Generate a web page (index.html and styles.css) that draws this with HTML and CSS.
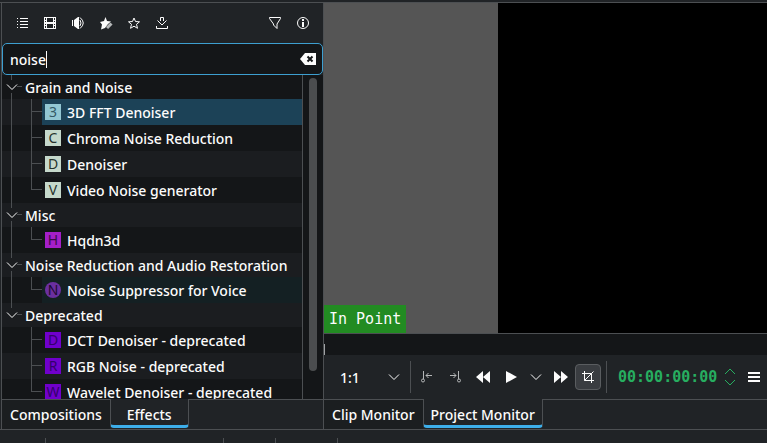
FILE: index.html
```html
<!DOCTYPE html>
<html lang="en">
<head>
    <meta charset="UTF-8">
    <meta name="viewport" content="width=device-width, initial-scale=1.0">
    <title>Effects - Project Monitor</title>
    <link rel="stylesheet" href="styles.css">
</head>
<body>
    <main class="workspace">
        <section class="dock effects">
            <div class="toolbar">
                <button class="tool" aria-label="Main effects"><svg width="16" height="16" viewBox="0 0 16 16" fill="#fcfcfc"><path d="M3 3h1v1H3zM6 3h8v1H6zM3 6h1v1H3zM6 6h8v1H6zM3 9h1v1H3zM6 9h8v1H6zM3 12h1v1H3zM6 12h8v1H6z"/></svg></button>
                <button class="tool" aria-label="Video effects"><svg width="16" height="16" viewBox="0 0 16 16" fill="#fcfcfc" fill-rule="evenodd"><path d="M2 2h12v12H2zM3 3v2h1V3zM3 6v1h1V6zM3 9v1h1V9zM3 11v2h1v-2zM12 3v2h1V3zM12 6v1h1V6zM12 9v1h1V9zM12 11v2h1v-2zM5 3v4h6V3zM5 9v4h6V9z"/></svg></button>
                <button class="tool" aria-label="Audio effects"><svg width="16" height="16" viewBox="0 0 16 16"><path fill="#fcfcfc" d="M2 5h1v6H2zM4 5l4-3h1v12H8l-4-3z"/><path fill="none" stroke="#fcfcfc" d="M10 5q2 3 0 6M10 2.500q6.500 5.500 0 11"/></svg></button>
                <button class="tool" aria-label="Custom effects"><svg width="16" height="16" viewBox="0 0 16 16"><path fill="#fcfcfc" d="M7.500 2l1.500 4 4 .5-3 2.500-3 4-4 1.500 1-5L2 7l4-1z"/><path fill="none" stroke="#b5b7b8" stroke-width="3" d="M9 13l4.500-4.500"/></svg></button>
                <button class="tool" aria-label="Favorite effects"><svg width="16" height="16" viewBox="0 0 16 16"><path fill="none" stroke="#fcfcfc" d="M8 3l1.500 3.500 4 .3-3 2.500 1 4L8 11.200l-3.500 2.100 1-4-3-2.500 4-.3z"/></svg></button>
                <button class="tool" aria-label="Download effects"><svg width="16" height="16" viewBox="0 0 16 16"><path fill="none" stroke="#fcfcfc" d="M6.500 6V2.500h3V6M3.500 5.500L8 10l4.500-4.500M2.500 11v2.500h11V11"/></svg></button>
                <span class="spacer"></span>
                <button class="tool" aria-label="Filter"><svg width="16" height="16" viewBox="0 0 16 16"><path fill="none" stroke="#fcfcfc" d="M2.500 2.500h11v1L10 9v4.500L6.500 10V9L2.500 3.500z"/></svg></button>
                <button class="tool" aria-label="Show information"><svg width="16" height="16" viewBox="0 0 16 16"><circle cx="8" cy="8" r="5.500" fill="none" stroke="#fcfcfc"/><path fill="#fcfcfc" d="M7 4h2v2H7zM7 7h2v5H7z"/></svg></button>
            </div>

            <div class="search">
                <input type="text" class="search-input" aria-label="Search effects" value="noise" spellcheck="false">
                <span class="caret"></span>
                <button class="clear" aria-label="Clear"><svg width="16" height="16" viewBox="0 0 16 16"><path fill="#fcfcfc" d="M5 2h11v12H5L0 8z"/><path stroke="#141618" stroke-width="2" d="M7.500 5.500l5 5M12.500 5.500l-5 5"/></svg></button>
            </div>

            <div class="tree-view">
                <ul class="tree">
                    <li class="group first"><span class="arrow"><svg width="12" height="8" viewBox="0 0 12 8"><path d="M1 1.500l5 5 5-5"/></svg></span>Grain and Noise</li>
                    <li class="item"><span class="branch"></span><span class="label selected"><span class="tile blue">3</span>3D FFT Denoiser</span></li>
                    <li class="item"><span class="branch"></span><span class="label"><span class="tile">C</span>Chroma Noise Reduction</span></li>
                    <li class="item"><span class="branch"></span><span class="label"><span class="tile">D</span>Denoiser</span></li>
                    <li class="item"><span class="branch end"></span><span class="label"><span class="tile">V</span>Video Noise generator</span></li>
                    <li class="group"><span class="arrow"><svg width="12" height="8" viewBox="0 0 12 8"><path d="M1 1.500l5 5 5-5"/></svg></span>Misc</li>
                    <li class="item"><span class="branch end"></span><span class="label"><span class="tile magenta">H</span>Hqdn3d</span></li>
                    <li class="group"><span class="arrow"><svg width="12" height="8" viewBox="0 0 12 8"><path d="M1 1.500l5 5 5-5"/></svg></span>Noise Reduction and Audio Restoration</li>
                    <li class="item"><span class="branch end"></span><span class="label audio"><span class="tile round">N</span>Noise Suppressor for Voice</span></li>
                    <li class="group last"><span class="arrow"><svg width="12" height="8" viewBox="0 0 12 8"><path d="M1 1.500l5 5 5-5"/></svg></span>Deprecated</li>
                    <li class="item"><span class="branch inner"></span><span class="label"><span class="tile violet">D</span>DCT Denoiser - deprecated</span></li>
                    <li class="item"><span class="branch inner"></span><span class="label"><span class="tile violet">R</span>RGB Noise - deprecated</span></li>
                    <li class="item"><span class="branch inner end"></span><span class="label"><span class="tile violet">W</span>Wavelet Denoiser - deprecated</span></li>
                </ul>
                <div class="scrollbar"><div class="handle"></div></div>
            </div>

            <nav class="tabs">
                <button class="tab">Compositions</button>
                <button class="tab active wide">Effects</button>
            </nav>
        </section>

        <section class="dock monitor">
            <div class="screen">
                <div class="frame"></div>
                <span class="in-point">In Point</span>
            </div>
            <div class="ruler"><span class="playhead"></span></div>
            <div class="controls">
                <div class="zoom">
                    <select class="zoom-select" aria-label="Zoom level">
                        <option>1:1</option>
                    </select>
                    <svg width="12" height="8" viewBox="0 0 12 8"><path d="M1 1.500l5 5 5-5"/></svg>
                </div>
                <span class="separator"></span>
                <button class="control" aria-label="Set zone in"><svg width="16" height="16" viewBox="0 0 16 16" fill="none" stroke="#b5b7b8"><path d="M4.500 2v8M7 6.500h6M9.500 4L7 6.500 9.500 9"/><circle cx="4" cy="11.500" r="1.500"/></svg></button>
                <button class="control" aria-label="Set zone out"><svg width="16" height="16" viewBox="0 0 16 16" fill="none" stroke="#b5b7b8"><path d="M11.500 2v8M3 6.500h6M6.500 4L9 6.500 6.500 9"/><circle cx="12" cy="11.500" r="1.500"/></svg></button>
                <button class="control" aria-label="Rewind"><svg width="16" height="16" viewBox="0 0 16 16" fill="#fcfcfc"><path d="M8 2v12L1 8zM15 2v12L8 8z"/></svg></button>
                <button class="control" aria-label="Play"><svg width="16" height="16" viewBox="0 0 16 16" fill="#fcfcfc"><path d="M3 2l11 6-11 6z"/></svg></button>
                <button class="control narrow" aria-label="Play options"><svg width="12" height="8" viewBox="0 0 12 8"><path d="M1 1.500l5 5 5-5"/></svg></button>
                <button class="control" aria-label="Forward"><svg width="16" height="16" viewBox="0 0 16 16" fill="#fcfcfc"><path d="M1 2l7 6-7 6zM8 2l7 6-7 6z"/></svg></button>
                <button class="control pressed" aria-label="Edit mode"><svg width="16" height="16" viewBox="0 0 16 16" fill="none" stroke="#fcfcfc"><path d="M2 4.500h9.500V14M4.500 2v9.500H14M4.500 11.500l9-9"/></svg></button>
                <span class="separator"></span>
                <input type="text" class="timecode" aria-label="Timecode" value="00:00:00:00">
                <span class="spin">
                    <button aria-label="Next frame"><svg width="12" height="7" viewBox="0 0 12 7"><path d="M1 6l5-5 5 5"/></svg></button>
                    <button aria-label="Previous frame"><svg width="12" height="7" viewBox="0 0 12 7"><path d="M1 1l5 5 5-5"/></svg></button>
                </span>
                <button class="control menu" aria-label="Menu"><svg width="12" height="12" viewBox="0 0 12 12" fill="#fcfcfc"><path d="M0 1h12v2H0zM0 5h12v2H0zM0 9h12v2H0z"/></svg></button>
            </div>
            <nav class="tabs">
                <button class="tab">Clip Monitor</button>
                <button class="tab active">Project Monitor</button>
            </nav>
        </section>
    </main>

    <footer class="timeline">
        <svg width="340" height="5" viewBox="0 0 340 5" fill="#4c4f52"><path d="M45 0h1v5h-1zM223 0h1v5h-1zM275 0h1v5h-1zM337 0h1v5h-1z"/></svg>
    </footer>
</body>
</html>
```

FILE: styles.css
```css
* {
    box-sizing: border-box;
}
body {
    margin: 0;
    height: 100vh;
    display: flex;
    flex-direction: column;
    overflow: hidden;
    background-color: #202326;
    color: #fcfcfc;
    font-family: "Noto Sans", sans-serif;
    font-size: 14px;
    font-weight: 500;
}
button, input, select {
    margin: 0;
    padding: 0;
    border: none;
    background: none;
    color: inherit;
    font: inherit;
    outline: none;
}
button {
    display: flex;
    align-items: center;
    justify-content: center;
}
svg {
    display: block;
}
.workspace {
    flex: 1;
    min-height: 0;
    display: grid;
    grid-template-columns: 323px 1fr;
    margin-top: 2px;
    border-top: 1px solid #4c4f52;
    border-bottom: 1px solid #4c4f52;
}
.dock {
    display: flex;
    flex-direction: column;
    min-width: 0;
    min-height: 0;
}
.effects {
    margin-left: 1px;
    border-left: 1px solid #4c4f52;
}

/* effects toolbar */
.toolbar {
    display: flex;
    align-items: center;
    height: 40px;
    flex: none;
    padding: 0 6px;
}
.tool {
    width: 28px;
    height: 28px;
}
.spacer {
    flex: 1;
}

/* search box */
.search {
    position: relative;
    display: flex;
    align-items: center;
    height: 32px;
    flex: none;
    padding: 0 6px 0 7px;
    border: 1px solid #3d9fd0;
    border-radius: 5px;
    background-color: #141618;
}
.search-input {
    flex: 1;
    min-width: 0;
    height: 24px;
}
.caret {
    position: absolute;
    left: 43px;
    top: 7px;
    width: 1px;
    height: 17px;
    background-color: #fcfcfc;
}

/* effects tree */
.tree-view {
    flex: 1;
    min-height: 0;
    display: flex;
    overflow: hidden;
    background-color: #141618;
}
.tree {
    flex: 1;
    min-width: 0;
    margin: 0;
    padding: 0;
    list-style: none;
    border-right: 1px solid #4c4f52;
}
.tree li {
    display: flex;
    align-items: center;
    white-space: nowrap;
}
.tree li:nth-child(even) {
    background-color: #1b1d20;
}
.group {
    height: 24px;
}
.item {
    height: 26px;
}
.arrow {
    display: flex;
    align-items: center;
    width: 23px;
    height: 24px;
    padding-left: 4px;
    background:
        linear-gradient(#4c4f52, #4c4f52) 9px 0 / 1px 5px no-repeat,
        linear-gradient(#4c4f52, #4c4f52) 9px 18px / 1px 6px no-repeat,
        linear-gradient(#4c4f52, #4c4f52) 15px 11px / 5px 1px no-repeat;
}
.last .arrow {
    background:
        linear-gradient(#4c4f52, #4c4f52) 9px 0 / 1px 5px no-repeat,
        linear-gradient(#4c4f52, #4c4f52) 15px 11px / 5px 1px no-repeat;
}
.arrow path, .zoom path, .narrow path {
    fill: none;
    stroke: #fcfcfc;
}
.branch {
    flex: none;
    width: 40px;
    height: 26px;
    background:
        linear-gradient(#4c4f52, #4c4f52) 9px 0 / 1px 26px no-repeat,
        linear-gradient(#4c4f52, #4c4f52) 29px 0 / 1px 26px no-repeat,
        linear-gradient(#4c4f52, #4c4f52) 29px 12px / 11px 1px no-repeat;
}
.branch.end {
    background-size: 1px 26px, 1px 12px, 11px 1px;
}
.branch.inner {
    background-size: 0 0, 1px 26px, 11px 1px;
}
.branch.inner.end {
    background-size: 0 0, 1px 12px, 11px 1px;
}
.label {
    flex: 1;
    display: flex;
    align-items: center;
    gap: 6px;
    height: 26px;
    padding-left: 3px;
}
.selected {
    background-color: #1c4257;
}
.audio {
    background-color: #142023;
}
.tile {
    width: 16px;
    height: 16px;
    line-height: 16px;
    text-align: center;
    font-weight: 400;
    background-color: #c5d8cb;
    color: #26332b;
}
.tile.blue {
    background-color: #93c7d3;
    color: #345a66;
}
.tile.magenta {
    background-color: #a51fc9;
    color: #3b0b49;
}
.tile.round {
    border-radius: 50%;
    background-color: #6b2fa0;
    color: #1d0a30;
}
.tile.violet {
    background-color: #7000cc;
    color: #33006b;
}
.scrollbar {
    display: flex;
    justify-content: center;
    width: 20px;
    padding: 3px 0 28px;
}
.handle {
    width: 8px;
    border-radius: 4px;
    background-color: #4b4d4f;
}

/* dock tabs */
.tabs {
    display: flex;
    height: 30px;
    flex: none;
}
.tabs::after {
    content: "";
    flex: 1;
    border-top: 1px solid #4c4f52;
}
.tab {
    padding: 0 8px;
    border-top: 1px solid #4c4f52;
    background-color: #1b1e20;
    white-space: nowrap;
}
.tab.active {
    height: 29px;
    padding: 5px 7px 0;
    border: 1px solid #4c4f52;
    border-top: none;
    border-bottom: 3px solid #3daee9;
    border-radius: 0 0 4px 4px;
    background-color: #202326;
}
.tab.wide {
    padding: 5px 16px 0;
}

/* project monitor */
.monitor {
    border-left: 1px solid #4c4f52;
}
.screen {
    position: relative;
    flex: 1;
    min-height: 0;
    background-color: #555;
    border-bottom: 1px solid #4c4f52;
}
.frame {
    height: 100%;
    margin-left: 174px;
    background-color: #000;
}
.in-point {
    position: absolute;
    left: 0;
    bottom: 0;
    padding: 0 5px;
    line-height: 28px;
    background-color: #228b22;
    font-family: "DejaVu Sans Mono", monospace;
    font-size: 15px;
    font-weight: 400;
}
.ruler {
    display: flex;
    align-items: flex-end;
    height: 21px;
    flex: none;
    background-color: #141618;
}
.playhead {
    width: 1px;
    height: 11px;
    background-color: #a0a2a4;
}
.controls {
    display: flex;
    align-items: center;
    height: 44px;
    flex: none;
}
.zoom {
    position: relative;
    display: flex;
    align-items: center;
    width: 86px;
}
.zoom-select {
    width: 100%;
    height: 32px;
    padding-left: 16px;
    appearance: none;
}
.zoom svg {
    position: absolute;
    right: 10px;
    pointer-events: none;
}
.separator {
    width: 1px;
    height: 32px;
    background-color: #4c4f52;
}
.control {
    flex: none;
    width: 28px;
    height: 26px;
}
.zoom + .separator {
    margin-right: 2px;
}
.control.narrow {
    width: 22px;
}
.control.pressed {
    width: 26px;
    margin-right: 5px;
    border: 1px solid #5a5d60;
    border-radius: 4px;
    background-color: #3a3d41;
}
.timecode {
    flex: 1;
    min-width: 0;
    padding-left: 11px;
    color: #27ae60;
    font-family: "DejaVu Sans Mono", monospace;
    font-size: 15px;
    font-weight: bold;
}
.spin {
    display: flex;
    flex-direction: column;
    gap: 4px;
}
.spin path {
    fill: none;
    stroke: #27ae60;
}
.control.menu {
    width: 26px;
    margin-left: 5px;
}

/* top edge of the timeline */
.timeline {
    display: flex;
    align-items: flex-end;
    height: 13px;
    flex: none;
    background-color: #202326;
}
```
